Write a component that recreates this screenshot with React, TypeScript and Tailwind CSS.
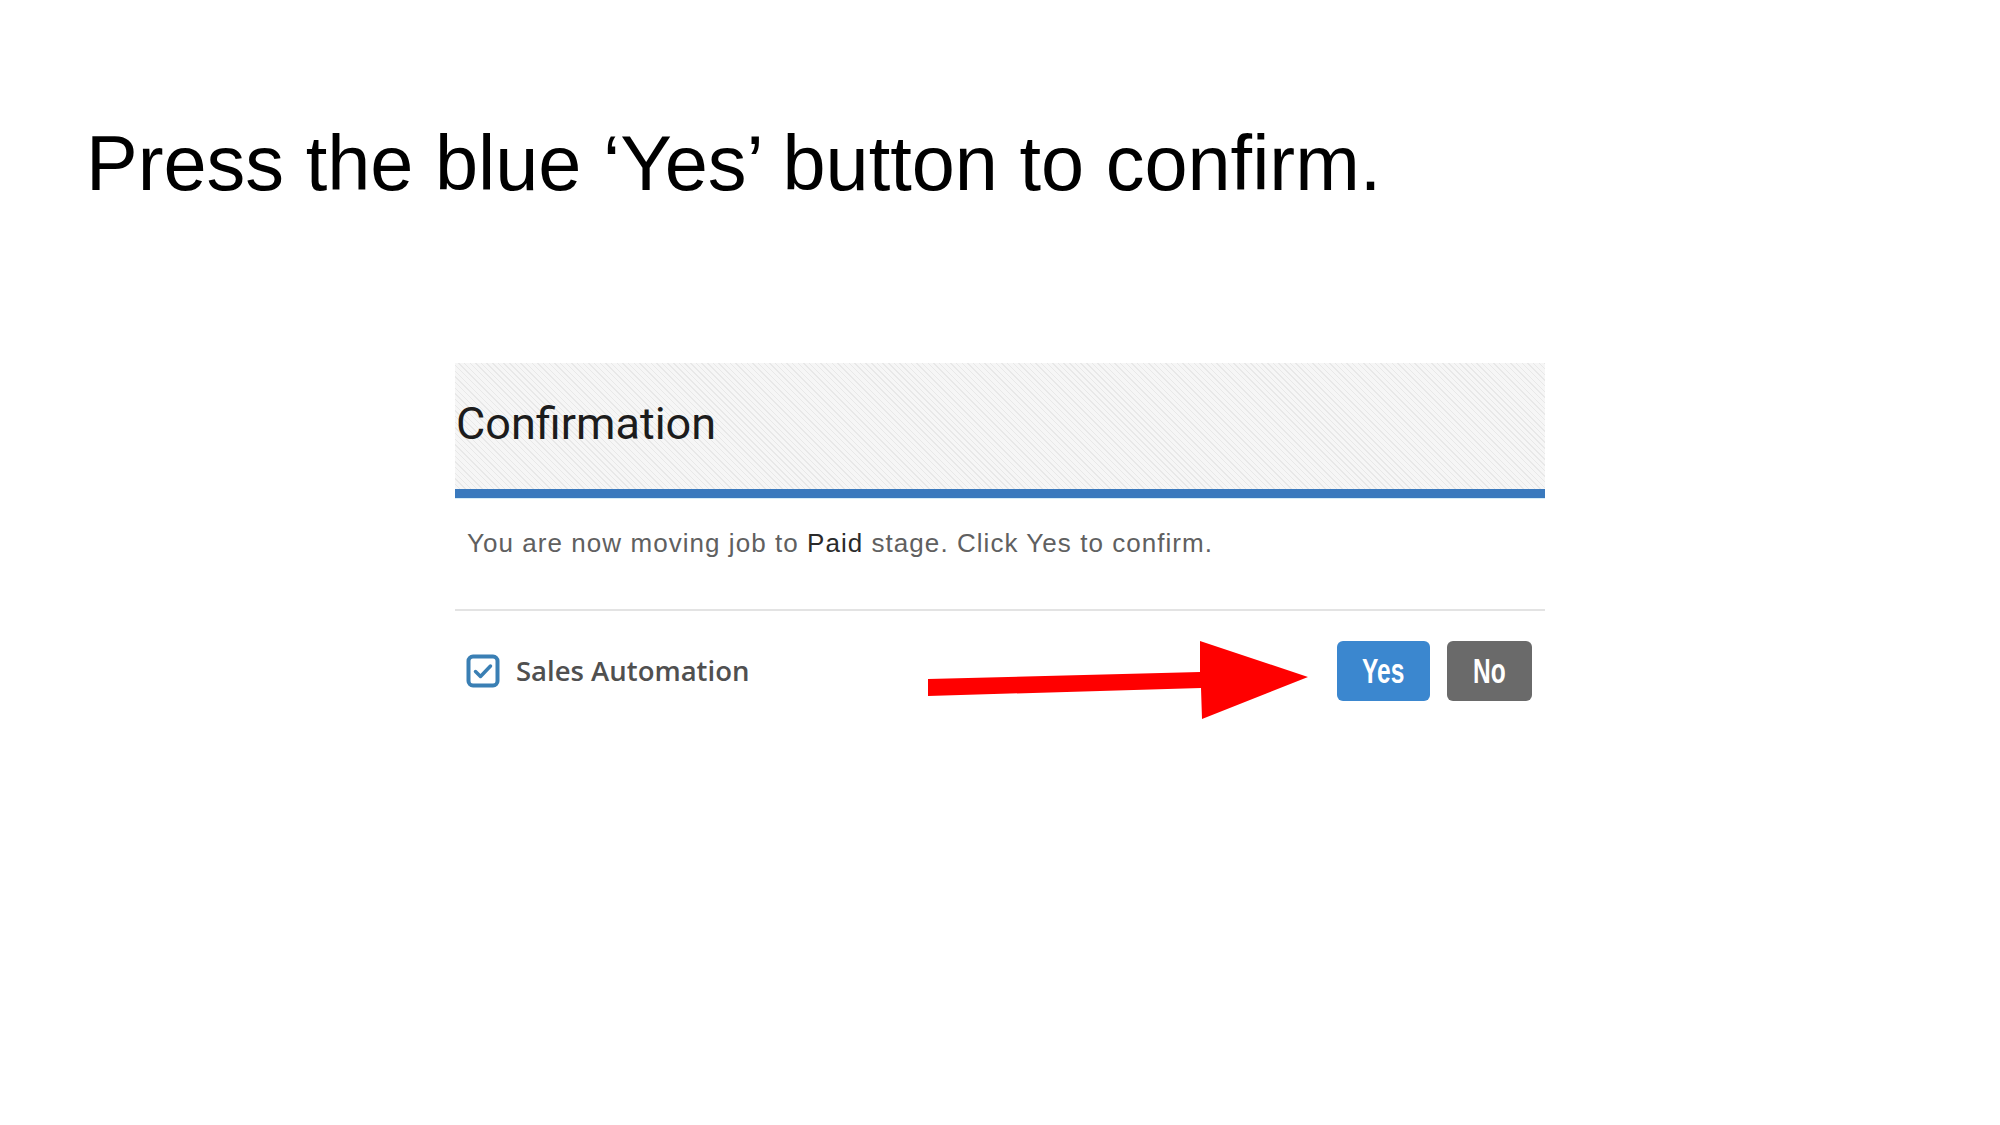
import React from "react";

function CheckIcon() {
  return (
    <svg viewBox="0 0 34 34" className="w-[34px] h-[34px]">
      <rect x="2.5" y="2.5" width="29" height="29" rx="4.5" fill="#fff" stroke="#3a7fb4" strokeWidth="4" />
      <path d="M9.5 17.5 L14.5 22.5 L24.5 12" fill="none" stroke="#3a7fb4" strokeWidth="3.5" strokeLinecap="round" strokeLinejoin="round" />
    </svg>
  );
}

function RedArrow() {
  return (
    <svg viewBox="0 0 380 78" className="w-[380px] h-[78px]">
      <path d="M0 38 L272 31 L272 0 L380 36 L274 78 L273 47 L0 55 Z" fill="#ff0000" />
    </svg>
  );
}

export default function App() {
  return (
    <div className="w-full min-h-[1125px] bg-white font-['Liberation_Sans',Arial,sans-serif]">
      <h1 className="pl-[86px] pt-[125px] text-[77.5px] leading-none text-black font-normal">
        Press the blue ‘Yes’ button to confirm.
      </h1>

      {/* dialog crop */}
      <div className="ml-[455px] mt-[160px] w-[1090px]">
        <div className="h-[126px] pt-[38px] pl-[1px] bg-[repeating-linear-gradient(45deg,#f6f6f6_0px,#f6f6f6_3px,#e8e8e8_3px,#e8e8e8_4px)]">
          <div className="font-['Roboto',sans-serif] text-[45px] leading-none text-[#1c1c1c]">
            Confirmation
          </div>
        </div>
        <div className="h-[9px] bg-[#3a79bd]" />
        <div className="h-[1px] bg-[#d6ecf6]" />

        <div className="pt-[31px] pl-[12px] text-[26px] leading-none tracking-[1.05px] text-[#606060]">
          You are now moving job to <span className="text-[#2a2a2a]">Paid</span> stage. Click Yes to confirm.
        </div>

        <div className="mt-[53px] h-[2px] bg-[#e3e3e3]" />

        <div className="relative mt-[30px] flex h-[60px] items-center justify-between pl-[11px] pr-[13px]">
          <div className="flex items-center gap-[16px]">
            <CheckIcon />
            <span className="font-['Open_Sans',sans-serif] text-[27.5px] font-semibold text-[#505050]">
              Sales Automation
            </span>
          </div>

          <div className="absolute left-[473px] top-0">
            <RedArrow />
          </div>

          <div className="flex items-center gap-[17px]">
            <button
              type="button"
              className="flex h-[60px] w-[93px] items-center justify-center rounded-[6px] bg-[#3b87cf] text-white"
            >
              <span className="inline-block scale-x-[0.7] text-[35px] font-bold leading-none">Yes</span>
            </button>
            <button
              type="button"
              className="flex h-[60px] w-[85px] items-center justify-center rounded-[6px] bg-[#6a6a6a] text-white"
            >
              <span className="inline-block scale-x-[0.7] text-[35px] font-bold leading-none">No</span>
            </button>
          </div>
        </div>
      </div>
    </div>
  );
}
